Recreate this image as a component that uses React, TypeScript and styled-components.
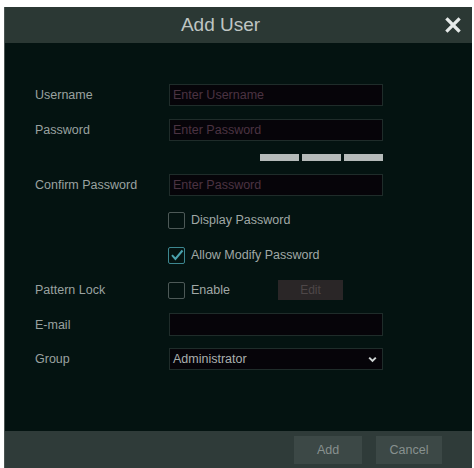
import React from "react";
import styled, { createGlobalStyle } from "styled-components";

const Global = createGlobalStyle`
  html, body { margin: 0; padding: 0; background: #ffffff; width: 474px; height: 468px; overflow: hidden; }
  body { font-family: "Liberation Sans", Arial, sans-serif; }
  #root { padding: 7px 2px 0 5px; }
`;

const Dialog = styled.div`
  width: 467px;
  height: 461px;
  display: flex;
  flex-direction: column;
  background: #041311;
  box-shadow: -1px 0 0 #4a5452;
`;

const Header = styled.div`
  height: 36px;
  flex: none;
  display: flex;
  align-items: center;
  background: #2b3834;
`;

const Title = styled.div`
  flex: 1;
  text-align: center;
  color: #bfc5c3;
  font-size: 19px;
  line-height: 36px;
`;

const Close = styled.div`
  width: 36px;
  height: 36px;
  display: flex;
  align-items: center;
  justify-content: center;
  padding-right: 2px;
  box-sizing: border-box;
`;

const Body = styled.div`
  flex: 1;
  display: flex;
  flex-direction: column;
  gap: 13px;
  padding: 41px 0 0 30px;
`;

const Row = styled.div<{ $h?: number; $mt?: number }>`
  display: grid;
  grid-template-columns: 134px 214px;
  align-items: center;
  height: ${(p) => p.$h ?? 22}px;
  margin-top: ${(p) => p.$mt ?? 0}px;
`;

const Label = styled.div`
  color: #9aa2a0;
  font-size: 12.5px;
`;

const Input = styled.div<{ $h?: number }>`
  height: ${(p) => p.$h ?? 22}px;
  box-sizing: border-box;
  background: #060409;
  border: 1px solid #1f2c2a;
  display: flex;
  align-items: center;
  padding: 0 5px 0 3px;
  font-size: 12.5px;
`;

const Placeholder = styled.span`
  color: #4b3342;
`;

const Value = styled.span`
  flex: 1;
  color: #aab0ae;
`;

const Strength = styled.div`
  display: flex;
  justify-content: flex-end;
  gap: 3px;
`;

const Bar = styled.div`
  width: 39px;
  height: 7px;
  background: #b5bab9;
`;

const CheckWrap = styled.div<{ $w?: number }>`
  display: flex;
  align-items: center;
  gap: 6px;
  margin-left: -1px;
  width: ${(p) => (p.$w ? `${p.$w}px` : "auto")};
  flex: none;
`;

const Box = styled.div<{ $on?: boolean }>`
  width: 17px;
  height: 17px;
  box-sizing: border-box;
  border: 1.5px solid ${(p) => (p.$on ? "#3d8790" : "#4d5957")};
  border-radius: 2px;
  display: flex;
  align-items: center;
  justify-content: center;
`;

const CheckText = styled.span`
  color: #a0a8a6;
  font-size: 12.5px;
`;

const Inline = styled.div`
  display: flex;
  align-items: center;
`;

const EditBtn = styled.div`
  width: 65px;
  height: 20px;
  background: #2a2627;
  color: #4e4748;
  font-size: 12px;
  display: flex;
  align-items: center;
  justify-content: center;
`;

const Footer = styled.div`
  height: 32px;
  flex: none;
  background: #2f3b39;
  display: flex;
  justify-content: flex-end;
  align-items: flex-start;
  gap: 14px;
  padding: 5px 30px 0 0;
`;

const FootBtn = styled.div<{ $w: number }>`
  width: ${(p) => p.$w}px;
  height: 28px;
  background: #3c4846;
  color: #88918f;
  font-size: 12.5px;
  display: flex;
  align-items: center;
  justify-content: center;
`;

export default function App() {
  return (
    <>
      <Global />
      <Dialog>
        <Header>
          <Title>Add User</Title>
          <Close>
            <svg width="16" height="16" viewBox="0 0 16 16">
              <path d="M2.5 2.5 L13.5 13.5 M13.5 2.5 L2.5 13.5" stroke="#e6eae9" strokeWidth="3.2" strokeLinecap="square" />
            </svg>
          </Close>
        </Header>
        <Body>
          <Row>
            <Label>Username</Label>
            <Input><Placeholder>Enter Username</Placeholder></Input>
          </Row>
          <Row>
            <Label>Password</Label>
            <Input><Placeholder>Enter Password</Placeholder></Input>
          </Row>
          <Row $h={7}>
            <span />
            <Strength>
              <Bar />
              <Bar />
              <Bar />
            </Strength>
          </Row>
          <Row>
            <Label>Confirm Password</Label>
            <Input><Placeholder>Enter Password</Placeholder></Input>
          </Row>
          <Row>
            <span />
            <CheckWrap>
              <Box />
              <CheckText>Display Password</CheckText>
            </CheckWrap>
          </Row>
          <Row>
            <span />
            <CheckWrap>
              <Box $on>
                <svg width="14" height="14" viewBox="0 0 14 14">
                  <path d="M2 7.2 L5.4 11 L12.5 2.5" stroke="#4aa2ad" strokeWidth="2" fill="none" />
                </svg>
              </Box>
              <CheckText>Allow Modify Password</CheckText>
            </CheckWrap>
          </Row>
          <Row>
            <Label>Pattern Lock</Label>
            <Inline>
              <CheckWrap $w={110}>
                <Box />
                <CheckText>Enable</CheckText>
              </CheckWrap>
              <EditBtn>Edit</EditBtn>
            </Inline>
          </Row>
          <Row $h={23} $mt={-1}>
            <Label>E-mail</Label>
            <Input $h={23} />
          </Row>
          <Row $mt={-1}>
            <Label>Group</Label>
            <Input>
              <Value>Administrator</Value>
              <svg width="9" height="7" viewBox="0 0 9 7">
                <path d="M1.2 1.6 L4.5 4.9 L7.8 1.6" stroke="#d0d5d4" strokeWidth="2" fill="none" />
              </svg>
            </Input>
          </Row>
        </Body>
        <Footer>
          <FootBtn $w={68}>Add</FootBtn>
          <FootBtn $w={66}>Cancel</FootBtn>
        </Footer>
      </Dialog>
    </>
  );
}
